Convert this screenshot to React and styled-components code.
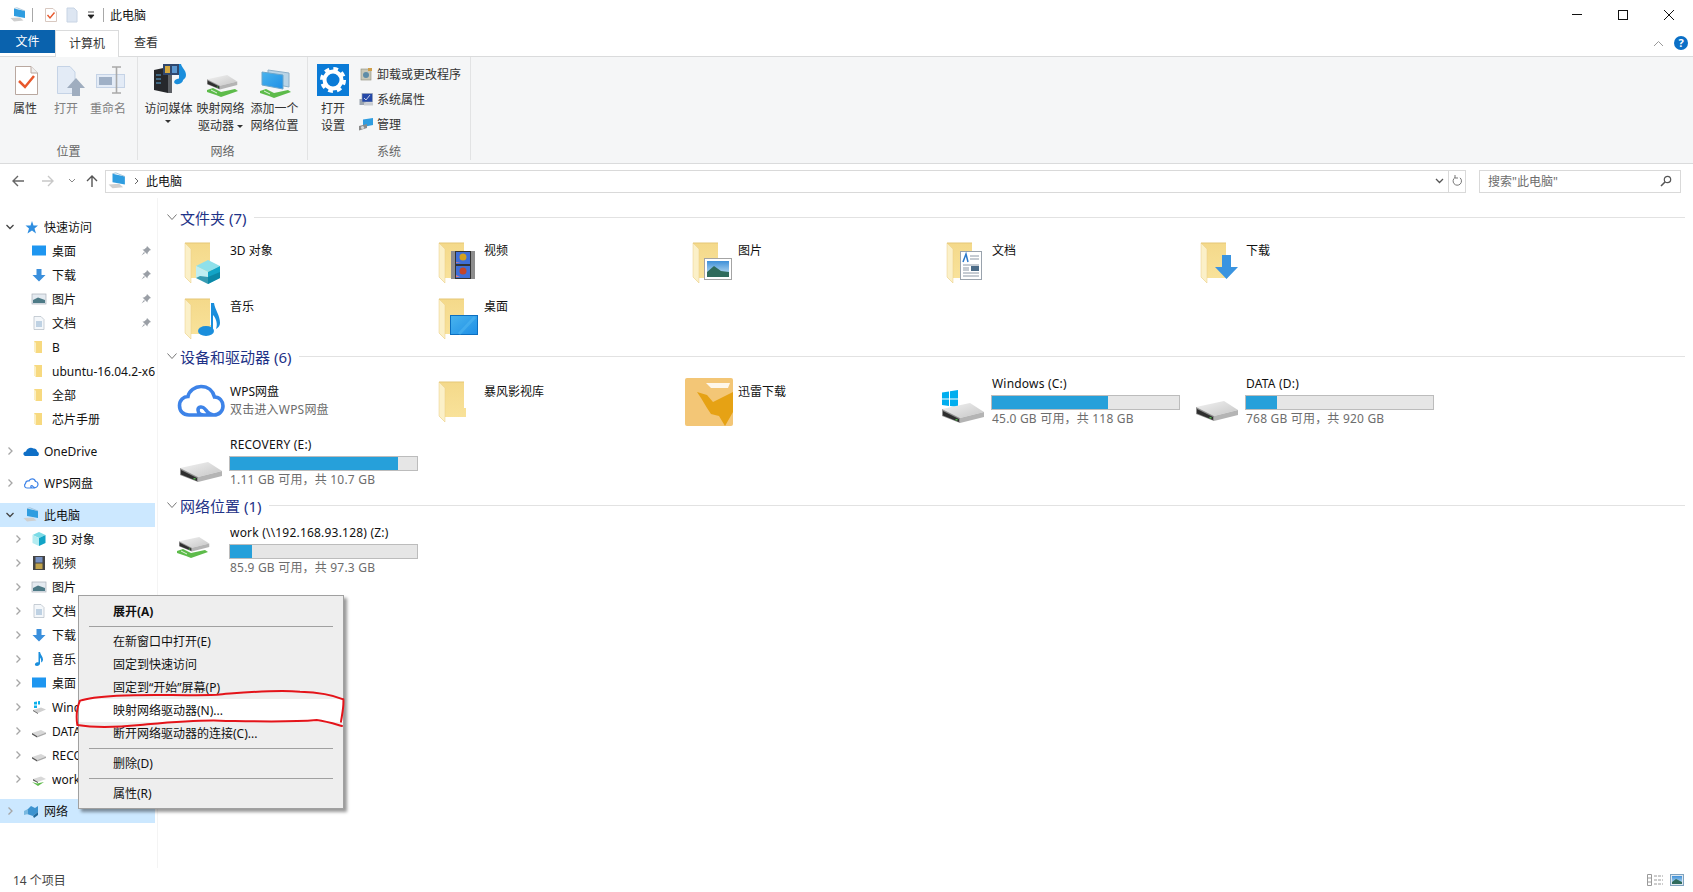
import React from "react";
import styled, { createGlobalStyle } from "styled-components";

const GlobalStyle = createGlobalStyle`
  html, body {
    margin: 0;
    padding: 0;
    background: #fff;
    overflow: hidden;
  }
  * { box-sizing: border-box; }
  body {
    font-family: "Noto Sans", "Noto Sans CJK SC", sans-serif;
    font-size: 12px;
    color: #111;
  }
`;

const Window = styled.div`
  position: relative;
  width: 1693px;
  height: 892px;
  display: flex;
  flex-direction: column;
  overflow: hidden;
`;

const HiddenDefs = styled.svg`
  position: absolute;
  width: 0;
  height: 0;
`;

/* title bar */
const TitleBar = styled.div`
  height: 30px;
  display: flex;
  align-items: center;
  padding: 0 1px 0 10px;
`;

const QuickSep = styled.span`
  width: 1px;
  height: 14px;
  background: #a8a8a8;
  margin: 0 ${({ $gap }) => $gap || 8}px;
`;

const QuickIcon = styled.svg`
  display: block;
  flex: none;
  margin-left: ${({ $ml }) => $ml || 0}px;
`;

const TitleText = styled.span`
  margin-left: -1px;
  font-size: 12px;
  flex: 1;
`;

const WinButton = styled.div`
  width: 46px;
  height: 30px;
  display: flex;
  align-items: center;
  justify-content: center;
`;

/* tabs */
const TabRow = styled.div`
  height: 26px;
  display: flex;
  align-items: flex-start;
  position: relative;
`;

const FileTab = styled.div`
  width: 55px;
  height: 23px;
  background: #0a62ad;
  color: #fff;
  font-size: 12px;
  line-height: 23px;
  text-align: center;
`;

const Tab = styled.div`
  width: ${({ $w }) => $w}px;
  height: ${({ $active }) => ($active ? 27 : 26)}px;
  background: #fff;
  color: #333;
  line-height: 26px;
  text-align: center;
  z-index: 1;
  ${({ $active }) =>
    $active &&
    `border: 1px solid #dadbdc;
     border-bottom: none;
     line-height: 25px;`}
`;

const TabRight = styled.div`
  margin-left: auto;
  display: flex;
  align-items: center;
  gap: 10px;
  height: 26px;
  padding-right: 5px;
`;

const HelpDot = styled.span`
  width: 14px;
  height: 14px;
  border-radius: 50%;
  background: #0b6fc6;
  color: #fff;
  font-size: 11px;
  font-weight: 700;
  line-height: 14px;
  text-align: center;
`;

/* ribbon */
const Ribbon = styled.div`
  height: 108px;
  display: flex;
  background: #f5f6f7;
  border-top: 1px solid #dadbdc;
  border-bottom: 1px solid #dadbdc;
`;

const RibbonGroup = styled.div`
  width: ${({ $w }) => $w}px;
  display: flex;
  flex-direction: column;
  border-right: 1px solid #e2e3e4;
  margin-bottom: 3px;
`;

const GroupBody = styled.div`
  flex: 1;
  display: flex;
  padding: 5px 0 0 ${({ $pad }) => $pad}px;
`;

const GroupLabel = styled.div`
  height: 20px;
  line-height: 20px;
  text-align: center;
  color: #666;
  font-size: 12px;
  margin-bottom: -2px;
`;

const RibbonButton = styled.div`
  width: ${({ $w }) => $w}px;
  display: flex;
  flex-direction: column;
  align-items: center;
  flex: none;
  color: ${({ $disabled }) => ($disabled ? "#808080" : "#333")};
`;

const RibbonGlyph = styled.svg`
  display: block;
  width: 40px;
  height: 38px;
  flex: none;
`;

const RibbonLabel = styled.div`
  font-size: 12px;
  line-height: 17px;
  text-align: center;
  white-space: nowrap;
`;

const Caret = styled.span`
  display: inline-block;
  width: 0;
  height: 0;
  border-left: 3px solid transparent;
  border-right: 3px solid transparent;
  border-top: 3px solid #333;
  vertical-align: middle;
  margin-left: ${({ $ml }) => $ml || 0}px;
`;

const CaretLine = styled.div`
  line-height: 8px;
  height: 8px;
  text-align: center;
`;

const SmallList = styled.div`
  margin-left: 10px;
  display: flex;
  flex-direction: column;
  margin-top: -1px;
`;

const SmallItem = styled.div`
  height: 25px;
  display: flex;
  align-items: center;
  gap: 4px;
  color: #333;
  white-space: nowrap;
`;

/* address bar */
const AddressRow = styled.div`
  height: 34px;
  display: flex;
  align-items: center;
`;

const NavButtons = styled.div`
  width: 105px;
  height: 22px;
  display: flex;
  align-items: center;
  flex: none;
  padding-left: 11px;
`;

const NavIcon = styled.svg`
  display: block;
  flex: none;
  margin-left: ${({ $ml }) => $ml || 0}px;
`;

const AddressBox = styled.div`
  width: 1361px;
  height: 23px;
  border: 1px solid #d9d9d9;
  display: flex;
  align-items: center;
  padding-left: 2px;
  flex: none;
`;

const Crumb = styled.span`
  margin-left: 6px;
  color: #111;
  flex: 1;
`;

const AddressEnd = styled.div`
  width: 17px;
  height: 21px;
  display: flex;
  align-items: center;
  justify-content: center;
  border-left: ${({ $line }) => ($line ? "1px solid #d9d9d9" : "none")};
`;

const SearchBox = styled.div`
  width: 202px;
  height: 23px;
  margin-left: 13px;
  border: 1px solid #d9d9d9;
  display: flex;
  align-items: center;
  justify-content: space-between;
  padding: 0 8px 0 8px;
  color: #6d6d6d;
  flex: none;
`;

/* body */
const Body = styled.div`
  flex: 1;
  display: flex;
  min-height: 0;
`;

const Sidebar = styled.nav`
  width: 158px;
  padding-top: 17px;
  border-right: 1px solid #f4f4f4;
  flex: none;
  overflow: hidden;
`;

const NavRow = styled.div`
  width: 155px;
  height: 24px;
  display: flex;
  align-items: center;
  padding-left: ${({ $level }) => ($level ? 10 : 2)}px;
  margin-top: ${({ $gap }) => ($gap ? 8 : 0)}px;
  background: ${({ $selected }) => ($selected ? "#cce8ff" : "transparent")};
  white-space: nowrap;
  overflow: hidden;
  color: #111;
`;

const Chevron = styled.svg`
  width: 16px;
  height: 16px;
  flex: none;
`;

const NavGlyph = styled.svg`
  width: 16px;
  height: 16px;
  flex: none;
  margin: 0 5px;
`;

const NavText = styled.span`
  flex: 1;
  min-width: 0;
  overflow: hidden;
`;

const Pin = styled.svg`
  width: 12px;
  height: 12px;
  flex: none;
  margin-right: 3px;
`;

const Content = styled.main`
  flex: 1;
  min-width: 0;
  padding: 9px 8px 0 7px;
`;

const Section = styled.section`
  margin-top: ${({ $mt }) => $mt || 0}px;
`;

const SectionHeader = styled.header`
  height: 20px;
  display: flex;
  align-items: center;
  color: #1e3287;
  font-size: 15px;
  white-space: nowrap;
`;

const HeaderChevron = styled.svg`
  width: 15px;
  height: 15px;
  flex: none;
`;

const HeaderRule = styled.span`
  flex: 1;
  height: 1px;
  background: #e2e2e2;
  margin-left: 8px;
`;

const TileGrid = styled.div`
  display: grid;
  grid-template-columns: repeat(5, 254px);
  grid-auto-rows: ${({ $rows }) => $rows || 52}px;
  row-gap: ${({ $gap }) => $gap || 4}px;
  margin: 12px 0 0 10px;
`;

const Tile = styled.div`
  display: flex;
  min-width: 0;
`;

const TileIcon = styled.svg`
  width: 55px;
  height: 52px;
  flex: none;
`;

const TileBody = styled.div`
  width: 199px;
  padding-top: ${({ $top }) => $top || 0}px;
`;

const TileName = styled.div`
  color: #111;
  line-height: ${({ $lh }) => $lh || 18}px;
  letter-spacing: ${({ $lh }) => ($lh ? 0.2 : 0)}px;
  white-space: nowrap;
`;

const TileSub = styled.div`
  color: #6d6d6d;
  line-height: 18px;
  letter-spacing: 0.2px;
  white-space: nowrap;
`;

const UsageBar = styled.div`
  width: 189px;
  height: 15px;
  margin: 5px 0 0 -1px;
  background: #e6e6e6;
  border: 1px solid #bcbcbc;
`;

const UsageFill = styled.div`
  height: 100%;
  background: #26a0da;
`;

/* status bar */
const StatusBar = styled.footer`
  height: 24px;
  display: flex;
  align-items: center;
  justify-content: space-between;
  padding: 0 9px 0 13px;
  color: #444;
  flex: none;
`;

const ViewToggles = styled.div`
  display: flex;
  gap: 7px;
  align-items: center;
`;

/* context menu */
const ContextMenu = styled.div`
  position: absolute;
  left: 78px;
  top: 595px;
  width: 266px;
  padding: 4px 0 3px;
  background: #eeeeee;
  border: 1px solid #a0a0a0;
  box-shadow: 3px 3px 3px rgba(0, 0, 0, 0.4);
  z-index: 5;
`;

const MenuItem = styled.div`
  height: 23px;
  line-height: 23px;
  padding-left: 34px;
  color: #111;
  font-weight: ${({ $bold }) => ($bold ? 700 : 400)};
  background: ${({ $hot }) => ($hot ? "#fff" : "transparent")};
`;

const MenuSep = styled.div`
  height: 1px;
  background: #a0a0a0;
  margin: 3px 10px;
`;

const RedCircle = styled.svg`
  position: absolute;
  left: 0;
  top: 530px;
  width: 360px;
  height: 362px;
  z-index: 6;
  pointer-events: none;
`;

/* drawings */
const Defs = () => (
  <HiddenDefs>
    <defs>
      <linearGradient id="fold" x1="0" y1="0" x2="0" y2="1">
        <stop offset="0" stopColor="#f4d98a" />
        <stop offset="1" stopColor="#f9e39c" />
      </linearGradient>
      <linearGradient id="top" x1="0" y1="0" x2="1" y2="1">
        <stop offset="0" stopColor="#f2f2f2" />
        <stop offset="1" stopColor="#c6c6c6" />
      </linearGradient>
      <linearGradient id="sky" x1="0" y1="0" x2="0" y2="1">
        <stop offset="0" stopColor="#3f90d8" />
        <stop offset="1" stopColor="#cfe8f5" />
      </linearGradient>
      <linearGradient id="screen" x1="0" y1="0" x2="1" y2="1">
        <stop offset="0" stopColor="#49b4ee" />
        <stop offset="1" stopColor="#1e8fe6" />
      </linearGradient>
    </defs>
  </HiddenDefs>
);

const FolderShape = () => (
  <g>
    <path d="M10 4H35V30L37 30V39H16V44L10 38Z" fill="url(#fold)" />
    <path d="M10 4L16 10V44L10 38Z" fill="#fbf0c8" stroke="#e8cd87" strokeWidth="0.5" />
    <path d="M10 4H35" stroke="#e5c777" />
  </g>
);

const Drive = ({ x = 5, y = 25 }) => (
  <g transform={`translate(${x} ${y})`}>
    <path d="M0 6L28 0L42 9L18 15Z" fill="url(#top)" />
    <path d="M0 6L18 15V20L0 13Z" fill="#8f8f8f" />
    <path d="M1 8L17 16V19L1 12.5Z" fill="#2e2e2e" />
    <path d="M18 15L42 9V14L18 20Z" fill="#b4b4b4" />
    <rect x="13.5" y="16" width="2" height="1.5" fill="#4fb34a" />
  </g>
);

const GreenPipe = ({ x = 0, y = 0 }) => (
  <g transform={`translate(${x} ${y})`}>
    <path d="M0 4L6 2L14 6L28 3L31 5L14 11L9 9L0 6Z" fill="#5dbb4a" />
    <path d="M4 4L10 7" stroke="#fff" strokeWidth="0.8" />
  </g>
);

const tileIcons = {
  folder: null,
  cube: (
    <g>
      <path d="M33 21L45 27L33 33L21 27Z" fill="#8fe0ea" />
      <path d="M21 27L33 33V45L21 39Z" fill="#bfeef2" />
      <path d="M45 27L33 33V45L45 39Z" fill="#12a4c6" />
      <path d="M33 38L45 33V39L33 45L21 39L25 37Z" fill="#0a7f9c" opacity="0.75" />
    </g>
  ),
  film: (
    <g>
      <rect x="22" y="12" width="24" height="28" fill="#333" />
      <rect x="22" y="12" width="4" height="28" fill="#8d8d8d" />
      <rect x="42" y="12" width="4" height="28" fill="#8d8d8d" />
      <rect x="27" y="13" width="14" height="12" fill="#3e6fd8" />
      <rect x="27" y="27" width="14" height="12" fill="#3e6fd8" />
      <circle cx="34" cy="18" r="3.5" fill="#d6a21f" />
      <circle cx="34" cy="32" r="3.5" fill="#c4462a" />
      <path d="M27 23L32 24H27ZM27 36L31 38H27Z" fill="#d87b88" />
    </g>
  ),
  note: (
    <g fill="#1a8edc">
      <ellipse cx="31" cy="36" rx="8" ry="5" />
      <path d="M36 8H39C40 15 45 20 45 28C45 31 43 33 41 34C43 29 41 23 38 20L38 36H36Z" />
    </g>
  ),
  desktop: (
    <g>
      <rect x="21.5" y="20.5" width="27" height="19" fill="url(#screen)" stroke="#0c6fc0" />
      <path d="M30 39L46 22" stroke="#5cc0f5" strokeWidth="3" opacity="0.4" />
    </g>
  ),
  photo: (
    <g>
      <rect x="21.5" y="19.5" width="27" height="21" fill="#fff" stroke="#a4a4a4" />
      <rect x="24" y="22" width="22" height="16" fill="url(#sky)" />
      <path d="M24 33L31 27L38 32L46 33V38H24Z" fill="#2f6b5c" />
    </g>
  ),
  doc: (
    <g>
      <rect x="23.5" y="12.5" width="21" height="28" fill="#fff" stroke="#9aa3ad" />
      <path d="M26 23L29 15L31 23" stroke="#2b78c9" strokeWidth="1.5" fill="none" />
      <path d="M33 17H42M33 20H42M26 26H42M26 34H42M26 37H42" stroke="#8c98a6" />
      <rect x="34" y="27" width="8" height="5" fill="#4b6b87" />
      <path d="M26 29H32M26 31H32" stroke="#8c98a6" />
    </g>
  ),
  arrow: <path d="M31 16H40V28H47L35.5 40L24 28H31Z" fill="#3a94e0" />,
};

const FolderTile = ({ kind }) => (
  <TileIcon viewBox="0 0 55 52">
    <FolderShape />
    {tileIcons[kind]}
  </TileIcon>
);

const CloudIcon = () => (
  <TileIcon viewBox="0 0 55 52">
    <path
      d="M38 37H14C8 37 4.5 33 4.5 27.5C4.5 22 8.5 18.5 13 18.5C14 13 20 8.5 26 8.5C33 8.5 38 13 39.5 19C44.5 19 48 23 48 28C48 33 44 37 39 37C34 37 32 33.5 30 31C27.5 28 23 28.5 23 32C23 35 26 37 29 37"
      fill="none"
      stroke="#3d83e8"
      strokeWidth="3.6"
      strokeLinecap="round"
    />
  </TileIcon>
);

const ThunderIcon = () => (
  <TileIcon viewBox="0 0 55 52">
    <rect x="2" y="0" width="48" height="48" rx="2" fill="#f3c676" />
    <path d="M23 5H47L45 10H28Z" fill="#fff" opacity="0.85" />
    <path d="M14 14L24 17L30 24L50 14V34L42 48L36 38L28 36L24 30L18 20Z" fill="#e6a214" />
  </TileIcon>
);

const WinDriveIcon = () => (
  <TileIcon viewBox="0 0 55 52">
    <path d="M5 14.5L12 13.5V20.5H5ZM13 13.3L21 12V20.5H13ZM5 21.5H12V28L5 27ZM13 21.5H21V29L13 28Z" fill="#00aeef" />
    <Drive x={5} y={25} />
  </TileIcon>
);

const DriveIcon = () => (
  <TileIcon viewBox="0 0 55 52">
    <Drive x={5} y={23} />
  </TileIcon>
);

const NetDriveIcon = () => (
  <TileIcon viewBox="0 0 55 52">
    <g transform="translate(4 10) scale(0.72)">
      <Drive x={0} y={0} />
    </g>
    <GreenPipe x={2} y={20} />
  </TileIcon>
);

const navGlyphs = {
  star: <path d="M9 2L10.5 6.5L15 6.5L11.5 9.5L13 14.5L9 11.5L4.5 14.5L6 9.5L2.5 6.5L7.5 6.5Z" fill="#2f8ee0" />,
  desktop: <rect x="1" y="2.5" width="14" height="10" fill="#1e96f0" />,
  down: <path d="M5.5 2H10.5V8H14.5L8 14.5L1.5 8H5.5Z" fill="#3a8fdc" />,
  picture: (
    <g>
      <rect x="1" y="3" width="14" height="10" fill="#e4eaf0" stroke="#a8b0b8" strokeWidth="0.7" />
      <path d="M2 9L7 6.5L14 9V12H2Z" fill="#4d7a86" />
    </g>
  ),
  doc: (
    <g>
      <path d="M3 1.5H10L13 4.5V14.5H3Z" fill="#f4f7fa" stroke="#b2bac4" strokeWidth="0.7" />
      <path d="M5 7H11M5 9H11M5 11H11" stroke="#6f9bc0" strokeWidth="0.8" />
    </g>
  ),
  folder: (
    <g>
      <path d="M3 2H11V14H5L3 12Z" fill="#f7d97f" />
      <path d="M3 2L5 4V14L3 12Z" fill="#fbefc4" />
    </g>
  ),
  onedrive: <path d="M2 13C-0.5 12 0 8.5 3 8.5C4 5 8 4 10.5 5.5C12 5 14.5 7 14 8.5C16.5 9 16.5 13 14 13Z" fill="#0f6fc6" />,
  wps: <path d="M12 13H4C1.5 13 0.8 10 2.5 8.5C2.8 6 5 5.5 6 6C7 3 11.5 3 12.5 6.5C15 6.5 15.5 9.5 14.5 11C13.5 13 11 13 10 11.5C9 10 7.8 10.5 7.8 11.5C7.8 12.5 9 13 10 13" fill="none" stroke="#3d83e8" strokeWidth="1.2" />,
  pc: (
    <g>
      <path d="M4 1.5L15 4V11L4 9Z" fill="#2f9de0" />
      <path d="M4 1.5L7 0.8L15 4" stroke="#8fb5d0" fill="none" strokeWidth="0.7" />
      <path d="M0.5 11L10 10.5L13.5 13.5L4 14.5Z" fill="#cfcfcf" />
    </g>
  ),
  cube: (
    <g>
      <path d="M8 1L14.5 4L8 7L1.5 4Z" fill="#7bdbe6" />
      <path d="M1.5 4L8 7V15L1.5 12Z" fill="#b4ecf1" />
      <path d="M14.5 4L8 7V15L14.5 12Z" fill="#12a4c6" />
    </g>
  ),
  film: (
    <g>
      <rect x="2" y="1" width="12" height="14" fill="#444" />
      <rect x="4.5" y="2" width="7" height="5.5" fill="#7690c0" />
      <rect x="4.5" y="8.5" width="7" height="5.5" fill="#c0a24a" />
    </g>
  ),
  note: <path d="M7.5 1H9C9.5 4 12 5.5 12 8.5C12 10 11 11 10 11.5C10.5 9.5 10 7.5 9 6.5V12.5C9 14 7.5 15 6 15C4.5 15 3.5 14 4 13C4.5 11.8 6.3 11 7.5 11.5Z" fill="#1a8edc" />,
  win: (
    <g>
      <path d="M3 3L6 2.5V5.5H3ZM7 2.3L9 2V5.5H7ZM3 6.5H6V9H3Z" fill="#0cb0ea" />
      <path d="M2 11L10 8.5L15 10.5L7 14Z" fill="#d0d0d0" />
      <path d="M2 11L7 14V15L2 12Z" fill="#666" />
    </g>
  ),
  drive: (
    <g>
      <path d="M1 10L10 7L15 9.5L6 13Z" fill="#d8d8d8" />
      <path d="M1 10L6 13V14.5L1 11.5Z" fill="#555" />
      <path d="M6 13L15 9.5V11L6 14.5Z" fill="#aaa" />
    </g>
  ),
  netdrive: (
    <g>
      <path d="M2 8L10 5.5L15 8L7 11Z" fill="#d8d8d8" />
      <path d="M2 8L7 11V12L2 9.5Z" fill="#555" />
      <path d="M1 11L6 12.5L13 11L7 15Z" fill="#5dbb4a" />
    </g>
  ),
  network: (
    <g>
      <path d="M4 7L8 3L12 5L15 3V9L10 13L4 11Z" fill="#3d93cf" />
      <path d="M1 8L5 6V11L1 12Z" fill="#7ab9e0" />
      <path d="M10 13L15 9V12L11 15Z" fill="#21699b" />
    </g>
  ),
};

const navRows = [
  { text: "快速访问", icon: "star", open: true },
  { text: "桌面", icon: "desktop", level: 1, pin: true, bare: true },
  { text: "下载", icon: "down", level: 1, pin: true, bare: true },
  { text: "图片", icon: "picture", level: 1, pin: true, bare: true },
  { text: "文档", icon: "doc", level: 1, pin: true, bare: true },
  { text: "B", icon: "folder", level: 1, bare: true },
  { text: "ubuntu-16.04.2-x64", icon: "folder", level: 1, bare: true },
  { text: "全部", icon: "folder", level: 1, bare: true },
  { text: "芯片手册", icon: "folder", level: 1, bare: true },
  { text: "OneDrive", icon: "onedrive", gap: true },
  { text: "WPS网盘", icon: "wps", gap: true },
  { text: "此电脑", icon: "pc", open: true, gap: true, selected: true },
  { text: "3D 对象", icon: "cube", level: 1 },
  { text: "视频", icon: "film", level: 1 },
  { text: "图片", icon: "picture", level: 1 },
  { text: "文档", icon: "doc", level: 1 },
  { text: "下载", icon: "down", level: 1 },
  { text: "音乐", icon: "note", level: 1 },
  { text: "桌面", icon: "desktop", level: 1 },
  { text: "Windows (C:)", icon: "win", level: 1 },
  { text: "DATA (D:)", icon: "drive", level: 1 },
  { text: "RECOVERY (E:)", icon: "drive", level: 1 },
  { text: "work (\\\\192.168.93.128) (Z:)", icon: "netdrive", level: 1 },
  { text: "网络", icon: "network", gap: true, selected: true },
];

const Arrow = ({ open, bare }) => (
  <Chevron viewBox="0 0 16 16">
    {bare ? null : open ? (
      <path d="M4.5 6L8 9.5L11.5 6" fill="none" stroke="#444" strokeWidth="1.3" />
    ) : (
      <path d="M6.5 4.5L10 8L6.5 11.5" fill="none" stroke="#a6a6a6" strokeWidth="1.3" />
    )}
  </Chevron>
);

const PinIcon = () => (
  <Pin viewBox="0 0 12 12">
    <path d="M7 1L11 5L9.5 5.5L7.5 8L7.5 9.5L2.5 4.5L4 4.5L6.5 2.5ZM4 7L1.5 10.5L5 8Z" fill="#9a9fa6" />
  </Pin>
);

const RibbonIcons = {
  props: (
    <g>
      <path d="M10.5 4.5H26L32.5 11V32.5H10.5Z" fill="#fff" stroke="#b9a8a0" />
      <path d="M26 4.5V11H32.5" fill="#eee" stroke="#b9a8a0" />
      <path d="M14 19L20 25L29 14" fill="none" stroke="#e8582c" strokeWidth="2.5" />
    </g>
  ),
  open: (
    <g>
      <path d="M11.5 4.5H24L29 10V31.5H11.5Z" fill="#e3ebf6" stroke="#c5d3e6" />
      <path d="M30 16L39 26H34V34H26V26H21Z" fill="#9fadbf" />
    </g>
  ),
  rename: (
    <g>
      <rect x="8.5" y="12.5" width="28" height="13" fill="#e3ebf6" stroke="#c5d3e6" />
      <rect x="11" y="15" width="13" height="8" fill="#9fb0c6" />
      <path d="M24 5H33M24 31H33M28.5 5V31" stroke="#a9a9a9" strokeWidth="1.6" fill="none" />
    </g>
  ),
  media: (
    <g>
      <path d="M5 8L19 5V31L5 28Z" fill="#26282c" />
      <path d="M19 5L23 7V31H19Z" fill="#5e6166" />
      <path d="M7 13H12M7 17H12M7 21H12" stroke="#5ca8d8" strokeWidth="1.2" />
      <rect x="14" y="2" width="16" height="11" fill="#30486e" />
      <rect x="16" y="4" width="5" height="7" fill="#d5a93f" />
      <rect x="23" y="4" width="5" height="7" fill="#5c97cf" />
      <path d="M30 2H32C33 6 37 8 37 13C37 16 35 17 34 18C34 20 31 23 27 22C24 21 25 18 28 17L30 16.5Z" fill="#1a8edc" />
    </g>
  ),
  mapDrive: (
    <g>
      <g transform="translate(6 13) scale(0.72)">
        <Drive x={0} y={0} />
      </g>
      <GreenPipe x={6} y={24} />
    </g>
  ),
  addPlace: (
    <g>
      <path d="M13 8L34 11V25L13 21Z" fill="#b9d4e6" stroke="#8fb0c8" />
      <path d="M7 10L28 13V27L7 23Z" fill="url(#screen)" stroke="#6ba6cc" />
      <GreenPipe x={5} y={25} />
    </g>
  ),
  settings: (
    <g>
      <rect x="4" y="2" width="32" height="32" fill="#0a7bd7" />
      <circle cx="20" cy="18" r="11" fill="none" stroke="#fff" strokeWidth="4" strokeDasharray="4.6 4.04" />
      <circle cx="20" cy="18" r="8.5" fill="none" stroke="#fff" strokeWidth="4" />
    </g>
  ),
};

const SmallGlyph = ({ kind }) => (
  <svg width="14" height="14" viewBox="0 0 14 14">
    {kind === "uninstall" && (
      <g>
        <rect x="2" y="2" width="10" height="11" fill="#c8c8b8" stroke="#8d8d7a" strokeWidth="0.6" />
        <circle cx="7" cy="8" r="3" fill="#5e8da8" />
        <path d="M9 1H13V4H9Z" fill="#cf9f4a" />
      </g>
    )}
    {kind === "sys" && (
      <g>
        <rect x="0.5" y="7" width="6" height="6" fill="#9aa4b0" />
        <rect x="3" y="1.5" width="10.5" height="8.5" fill="#2549a8" stroke="#9aa4b0" strokeWidth="0.6" />
        <path d="M5 6L7 8L11 3" stroke="#e8eef8" fill="none" strokeWidth="0.8" />
        <rect x="5" y="10.5" width="9" height="3" fill="#c8ccd2" />
      </g>
    )}
    {kind === "manage" && (
      <g>
        <path d="M4 2.5L14 1V8L4 10Z" fill="#2f9de0" />
        <path d="M0 9L8 7V11L0 13.5Z" fill="#8a8a8a" />
        <circle cx="3.5" cy="10.5" r="1.6" fill="#d8d8d8" />
      </g>
    )}
  </svg>
);

const LargeButton = ({ w, kind, disabled, children }) => (
  <RibbonButton $w={w} $disabled={disabled}>
    <RibbonGlyph viewBox="0 0 40 38">{RibbonIcons[kind]}</RibbonGlyph>
    <RibbonLabel>{children}</RibbonLabel>
  </RibbonButton>
);

const DriveTile = ({ icon, name, used, sub }) => (
  <Tile>
    {icon}
    <TileBody>
      <TileName $lh={12}>{name}</TileName>
      <UsageBar>
        <UsageFill style={{ width: `${used}%` }} />
      </UsageBar>
      <TileSub>{sub}</TileSub>
    </TileBody>
  </Tile>
);

const SectionTitle = ({ children }) => (
  <SectionHeader>
    <HeaderChevron viewBox="0 0 15 15">
      <path d="M2.5 4.5L7 9.5L11.5 4.5" fill="none" stroke="#777" />
    </HeaderChevron>
    {children}
    <HeaderRule />
  </SectionHeader>
);

const App = () => (
  <Window>
    <GlobalStyle />
    <Defs />

    <TitleBar>
      <QuickIcon width="16" height="16" viewBox="0 0 16 16">
        {navGlyphs.pc}
      </QuickIcon>
      <QuickSep $gap={6} />
      <QuickIcon width="14" height="16" viewBox="0 0 14 16" $ml={5}>
        <path d="M1.5 1.5H9L12.5 5V14.5H1.5Z" fill="#fff" stroke="#d8c8c0" />
        <path d="M3.5 8L6 11L10.5 5.5" fill="none" stroke="#e8582c" strokeWidth="1.4" />
      </QuickIcon>
      <QuickIcon width="12" height="16" viewBox="0 0 12 16" $ml={8}>
        <path d="M1 1H8L11 4V15H1Z" fill="#dde6f2" stroke="#c8d4e4" />
      </QuickIcon>
      <QuickIcon width="10" height="10" viewBox="0 0 10 10" $ml={8}>
        <path d="M2 2H8M2 5H8L5 8.5Z" fill="#222" stroke="#222" strokeWidth="0.8" />
      </QuickIcon>
      <QuickSep $gap={7} />
      <TitleText>此电脑</TitleText>
      <WinButton>
        <svg width="10" height="2" viewBox="0 0 10 2">
          <rect width="10" height="1" fill="#111" />
        </svg>
      </WinButton>
      <WinButton>
        <svg width="10" height="10" viewBox="0 0 10 10">
          <rect x="0.5" y="0.5" width="9" height="9" fill="none" stroke="#111" />
        </svg>
      </WinButton>
      <WinButton>
        <svg width="10" height="10" viewBox="0 0 10 10">
          <path d="M0 0L10 10M10 0L0 10" stroke="#111" />
        </svg>
      </WinButton>
    </TitleBar>

    <TabRow>
      <FileTab>文件</FileTab>
      <Tab $w={64} $active>
        计算机
      </Tab>
      <Tab $w={54}>查看</Tab>
      <TabRight>
        <svg width="11" height="7" viewBox="0 0 11 7">
          <path d="M1 6L5.5 1.5L10 6" fill="none" stroke="#999" />
        </svg>
        <HelpDot>?</HelpDot>
      </TabRight>
    </TabRow>

    <Ribbon>
      <RibbonGroup $w={138}>
        <GroupBody $pad={6}>
          <LargeButton w={38} kind="props">属性</LargeButton>
          <LargeButton w={44} kind="open" disabled>打开</LargeButton>
          <LargeButton w={40} kind="rename" disabled>重命名</LargeButton>
        </GroupBody>
        <GroupLabel>位置</GroupLabel>
      </RibbonGroup>
      <RibbonGroup $w={170}>
        <GroupBody $pad={6}>
          <LargeButton w={49} kind="media">
            访问媒体
            <CaretLine>
              <Caret />
            </CaretLine>
          </LargeButton>
          <LargeButton w={55} kind="mapDrive">
            映射网络
            <br />
            驱动器
            <Caret $ml={3} />
          </LargeButton>
          <LargeButton w={53} kind="addPlace">
            添加一个
            <br />
            网络位置
          </LargeButton>
        </GroupBody>
        <GroupLabel>网络</GroupLabel>
      </RibbonGroup>
      <RibbonGroup $w={163}>
        <GroupBody $pad={9}>
          <RibbonButton $w={32}>
            <RibbonGlyph viewBox="0 0 40 38">{RibbonIcons.settings}</RibbonGlyph>
            <RibbonLabel>
              打开
              <br />
              设置
            </RibbonLabel>
          </RibbonButton>
          <SmallList>
            <SmallItem>
              <SmallGlyph kind="uninstall" />
              卸载或更改程序
            </SmallItem>
            <SmallItem>
              <SmallGlyph kind="sys" />
              系统属性
            </SmallItem>
            <SmallItem>
              <SmallGlyph kind="manage" />
              管理
            </SmallItem>
          </SmallList>
        </GroupBody>
        <GroupLabel>系统</GroupLabel>
      </RibbonGroup>
    </Ribbon>

    <AddressRow>
      <NavButtons>
        <NavIcon width="14" height="14" viewBox="0 0 14 14">
          <path d="M13 7H2M7 2L2 7L7 12" fill="none" stroke="#666" strokeWidth="1.4" />
        </NavIcon>
        <NavIcon width="14" height="14" viewBox="0 0 14 14" $ml={16}>
          <path d="M1 7H12M7 2L12 7L7 12" fill="none" stroke="#c8c8c8" strokeWidth="1.4" />
        </NavIcon>
        <NavIcon width="8" height="6" viewBox="0 0 8 6" $ml={13}>
          <path d="M1 1L4 4L7 1" fill="none" stroke="#888" />
        </NavIcon>
        <NavIcon width="14" height="14" viewBox="0 0 14 14" $ml={9}>
          <path d="M7 13V2M2 7L7 2L12 7" fill="none" stroke="#555" strokeWidth="1.4" />
        </NavIcon>
      </NavButtons>
      <AddressBox>
        <svg width="18" height="18" viewBox="0 0 16 16">
          {navGlyphs.pc}
        </svg>
        <NavIcon width="6" height="8" viewBox="0 0 6 8" $ml={8}>
          <path d="M1 1L4 4L1 7" fill="none" stroke="#666" />
        </NavIcon>
        <Crumb>此电脑</Crumb>
        <AddressEnd>
          <svg width="9" height="6" viewBox="0 0 9 6">
            <path d="M1 1L4.5 4.5L8 1" fill="none" stroke="#555" strokeWidth="1.3" />
          </svg>
        </AddressEnd>
        <AddressEnd $line>
          <svg width="11" height="12" viewBox="0 0 11 12">
            <path d="M3 2.5A4.2 4.2 0 1 0 8 2.8M3 0V3H6" fill="none" stroke="#777" />
          </svg>
        </AddressEnd>
      </AddressBox>
      <SearchBox>
        搜索"此电脑"
        <svg width="12" height="12" viewBox="0 0 12 12">
          <circle cx="7.5" cy="4.5" r="3.2" fill="none" stroke="#555" strokeWidth="1.2" />
          <path d="M5 7L1 11" stroke="#555" strokeWidth="1.6" />
        </svg>
      </SearchBox>
    </AddressRow>

    <Body>
      <Sidebar>
        {navRows.map((row, i) => (
          <NavRow key={i} $level={row.level} $gap={row.gap} $selected={row.selected}>
            <Arrow open={row.open} bare={row.bare} />
            <NavGlyph viewBox="0 0 16 16">{navGlyphs[row.icon]}</NavGlyph>
            <NavText>{row.text}</NavText>
            {row.pin && <PinIcon />}
          </NavRow>
        ))}
      </Sidebar>

      <Content>
        <Section>
          <SectionTitle>文件夹 (7)</SectionTitle>
          <TileGrid>
            {[
              ["3D 对象", "cube"],
              ["视频", "film"],
              ["图片", "photo"],
              ["文档", "doc"],
              ["下载", "arrow"],
              ["音乐", "note"],
              ["桌面", "desktop"],
            ].map(([name, kind]) => (
              <Tile key={name}>
                <FolderTile kind={kind} />
                <TileBody $top={3}>
                  <TileName>{name}</TileName>
                </TileBody>
              </Tile>
            ))}
          </TileGrid>
        </Section>

        <Section $mt={-1}>
          <SectionTitle>设备和驱动器 (6)</SectionTitle>
          <TileGrid $rows={56} $gap={5}>
            <Tile>
              <CloudIcon />
              <TileBody $top={5}>
                <TileName>WPS网盘</TileName>
                <TileSub>双击进入WPS网盘</TileSub>
              </TileBody>
            </Tile>
            <Tile>
              <FolderTile kind="folder" />
              <TileBody $top={5}>
                <TileName>暴风影视库</TileName>
              </TileBody>
            </Tile>
            <Tile>
              <ThunderIcon />
              <TileBody $top={5}>
                <TileName>迅雷下载</TileName>
              </TileBody>
            </Tile>
            <DriveTile icon={<WinDriveIcon />} name="Windows (C:)" used={62} sub="45.0 GB 可用，共 118 GB" />
            <DriveTile icon={<DriveIcon />} name="DATA (D:)" used={16.5} sub="768 GB 可用，共 920 GB" />
            <DriveTile icon={<DriveIcon />} name="RECOVERY (E:)" used={90} sub="1.11 GB 可用，共 10.7 GB" />
          </TileGrid>
        </Section>

        <Section>
          <SectionTitle>网络位置 (1)</SectionTitle>
          <TileGrid $rows={56}>
            <DriveTile
              icon={<NetDriveIcon />}
              name="work (\\192.168.93.128) (Z:)"
              used={12}
              sub="85.9 GB 可用，共 97.3 GB"
            />
          </TileGrid>
        </Section>
      </Content>
    </Body>

    <StatusBar>
      14 个项目
      <ViewToggles>
        <svg width="16" height="12" viewBox="0 0 16 12">
          <path d="M0.5 0.5H4.5V11.5H0.5ZM0.5 4H4.5M0.5 8H4.5" fill="none" stroke="#9a9a9a" />
          <path d="M7 2H16M7 6H16M7 10H16" stroke="#9a9a9a" strokeDasharray="3 1" />
        </svg>
        <svg width="14" height="12" viewBox="0 0 14 12">
          <rect x="0.5" y="0.5" width="13" height="11" fill="#dfe8f0" stroke="#7fa3bf" />
          <rect x="2" y="2" width="10" height="8" fill="url(#sky)" />
          <path d="M2 8L6 5L12 8V10H2Z" fill="#2f6b5c" />
        </svg>
      </ViewToggles>
    </StatusBar>

    <ContextMenu>
      <MenuItem $bold>展开(A)</MenuItem>
      <MenuSep />
      <MenuItem>在新窗口中打开(E)</MenuItem>
      <MenuItem>固定到快速访问</MenuItem>
      <MenuItem>固定到“开始”屏幕(P)</MenuItem>
      <MenuItem $hot>映射网络驱动器(N)...</MenuItem>
      <MenuItem>断开网络驱动器的连接(C)...</MenuItem>
      <MenuSep />
      <MenuItem>删除(D)</MenuItem>
      <MenuSep />
      <MenuItem>属性(R)</MenuItem>
    </ContextMenu>

    <RedCircle viewBox="0 0 1080 1086">
      <path
        d="M1030 508C1000 495 960 487 900 485C820 478 730 488 650 494C560 498 460 492 350 497C300 500 260 505 240 512C232 530 228 560 232 585C290 595 350 592 420 585C500 578 580 570 660 572C760 574 860 578 950 570C980 574 1005 582 1026 588M1030 508C1032 530 1026 555 1023 575"
        fill="none"
        stroke="#e4141a"
        strokeWidth="6"
        strokeLinecap="round"
      />
    </RedCircle>
  </Window>
);

export default App;
